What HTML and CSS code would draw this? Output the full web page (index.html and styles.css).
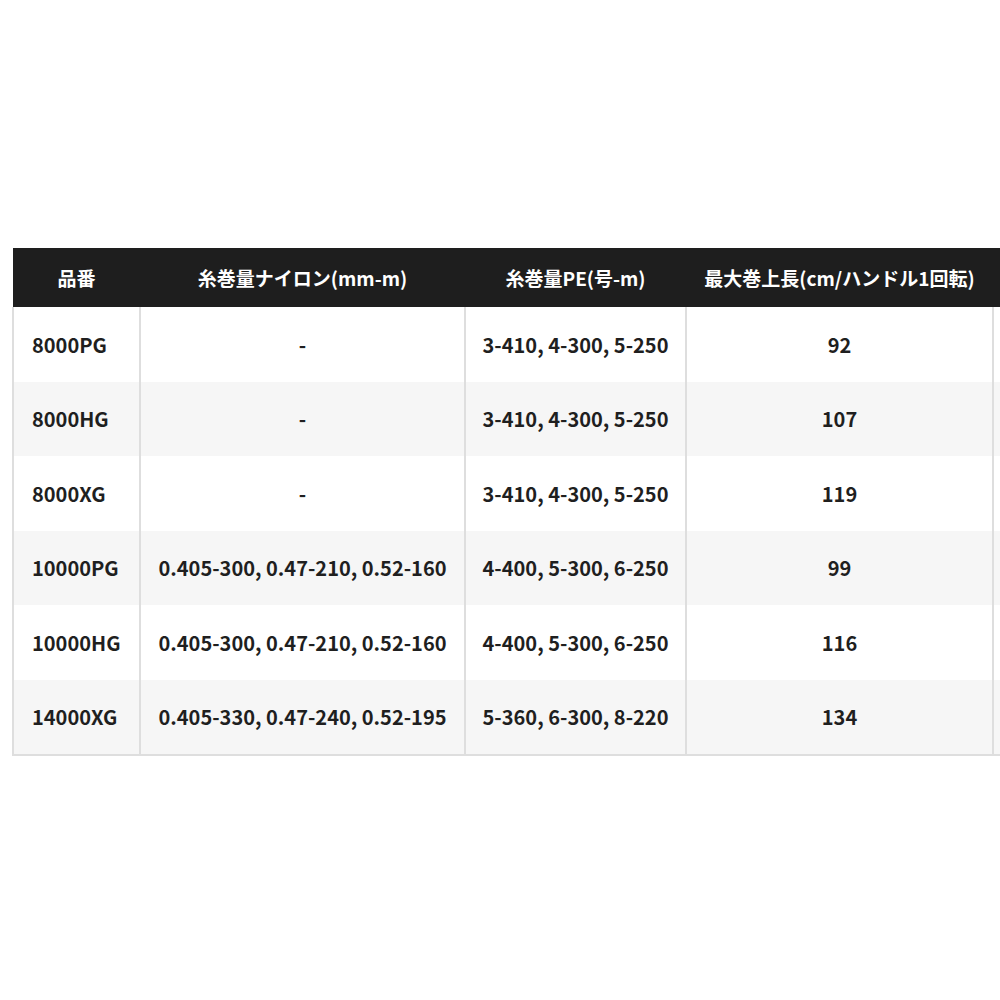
FILE: index.html
```html
<!DOCTYPE html>
<html lang="ja">
<head>
<meta charset="utf-8">
<link rel="stylesheet" href="styles.css">
</head>
<body>
<div class="wrap">
<table class="spec">
<colgroup>
<col class="c1"><col class="c2"><col class="c3"><col class="c4"><col class="c5">
</colgroup>
<thead>
<tr><th>品番</th><th>糸巻量ナイロン(mm-m)</th><th>糸巻量PE(号-m)</th><th>最大巻上長(cm/ハンドル1回転)</th><th></th></tr>
</thead>
<tbody>
<tr><td class="name">8000PG</td><td>-</td><td>3-410, 4-300, 5-250</td><td>92</td><td></td></tr>
<tr><td class="name">8000HG</td><td>-</td><td>3-410, 4-300, 5-250</td><td>107</td><td></td></tr>
<tr><td class="name">8000XG</td><td>-</td><td>3-410, 4-300, 5-250</td><td>119</td><td></td></tr>
<tr><td class="name">10000PG</td><td>0.405-300, 0.47-210, 0.52-160</td><td>4-400, 5-300, 6-250</td><td>99</td><td></td></tr>
<tr><td class="name">10000HG</td><td>0.405-300, 0.47-210, 0.52-160</td><td>4-400, 5-300, 6-250</td><td>116</td><td></td></tr>
<tr><td class="name">14000XG</td><td>0.405-330, 0.47-240, 0.52-195</td><td>5-360, 6-300, 8-220</td><td>134</td><td></td></tr>
</tbody>
</table>
</div>
</body>
</html>
```
FILE: styles.css
```css
html, body {
  margin: 0;
  padding: 0;
  background: #fff;
  overflow: hidden;
}
.wrap {
  width: 1000px;
  height: 1000px;
  overflow: hidden;
  padding-top: 248px;
  padding-left: 12px;
  box-sizing: border-box;
}
.spec {
  border-collapse: collapse;
  table-layout: fixed;
  width: 1200px;
  font-family: "Noto Sans CJK JP", "Noto Sans", sans-serif;
  font-weight: 700;
  font-size: 20px;
  color: #1f1f1f;
}
.c1 { width: 127px; }
.c2 { width: 325px; }
.c3 { width: 221px; }
.c4 { width: 307px; }
.c5 { width: 220px; }
.spec th {
  background: #1e1e1e;
  color: #fff;
  height: 59px;
  padding: 0;
  text-align: center;
  font-weight: 700;
  font-size: 19px;
  vertical-align: middle;
}
.spec td {
  height: 74.5px;
  padding: 0;
  text-align: center;
  vertical-align: middle;
  border-left: 2px solid #dedede;
}
.spec td.name {
  text-align: left;
  padding-left: 18px;
}
.spec tbody tr:nth-child(even) td {
  background: #f6f6f6;
}
.spec tbody tr:last-child td {
  border-bottom: 2px solid #dedede;
}
```
